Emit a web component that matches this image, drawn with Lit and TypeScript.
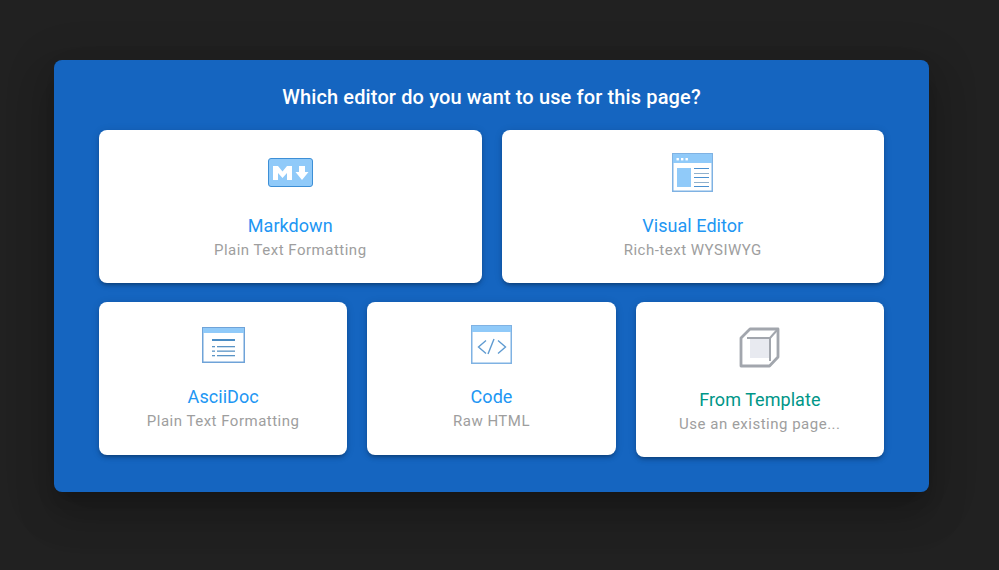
import { LitElement, html, css } from "lit";
import { customElement } from "lit/decorators.js";

const md = html`<svg class="icon" width="47" height="30" viewBox="0 0 47 30">
  <rect x="1.500" y="0.500" width="44" height="28" rx="2.500" fill="#90caf9" stroke="#3d8fd6" stroke-width="1"/>
  <path fill="#fff" d="M6 22V8h5l4.500 5.500L20 8h5v14h-5v-7l-4.500 5-4.500-5v7z"/>
  <path fill="#fff" d="M32 8h6v6h3.500l-6.500 8-6.500-8H32z"/>
</svg>`;

const visual = html`<svg class="icon" width="44" height="42" viewBox="0 0 44 42">
  <rect x="1.750" y="1.750" width="39.500" height="37.500" fill="#fff" stroke="#7fb2e3" stroke-width="1.500"/>
  <rect x="2" y="2" width="39" height="9" fill="#90caf9"/>
  <rect x="5.500" y="6" width="2.400" height="2.400" fill="#fff"/><rect x="10" y="6" width="2.400" height="2.400" fill="#fff"/><rect x="14.500" y="6" width="2.400" height="2.400" fill="#fff"/>
  <rect x="6" y="16" width="14" height="19" fill="#90caf9"/>
  <g fill="#4a90d0"><rect x="23" y="16" width="15" height="1"/><rect x="23" y="25" width="15" height="1"/><rect x="23" y="34" width="15" height="1"/></g>
  <g fill="#8fb0cc"><rect x="23" y="21" width="15" height="1"/><rect x="23" y="30" width="15" height="1"/></g>
</svg>`;

const ascii = html`<svg class="icon" width="46" height="40" viewBox="0 0 46 40">
  <rect x="2.750" y="2.750" width="41.500" height="34.500" fill="#fff" stroke="#6fa3d8" stroke-width="1.500"/>
  <rect x="3" y="3" width="41" height="5" fill="#90caf9"/>
  <rect x="12" y="14" width="23" height="2" fill="#4a8cc4"/>
  <g fill="#5a94c6"><rect x="12" y="21" width="3" height="1.300"/><rect x="17" y="21" width="18" height="1.300"/><rect x="12" y="25.500" width="3" height="1.300"/><rect x="17" y="25.500" width="18" height="1.300"/><rect x="12" y="30" width="3" height="1.300"/><rect x="17" y="30" width="18" height="1.300"/></g>
</svg>`;

const code = html`<svg class="icon" width="43" height="40" viewBox="0 0 43 40">
  <rect x="1.750" y="0.750" width="39.500" height="37.500" fill="#fff" stroke="#7fb2e3" stroke-width="1.500"/>
  <rect x="2" y="1" width="39" height="6" fill="#90caf9"/>
  <g fill="none" stroke="#5f9bd1" stroke-width="1.400">
    <path d="M16 15.500L8.500 22l7.500 6.500"/><path d="M28 15.500l7.500 6.500-7.500 6.500"/><path d="M24 14l-6 15"/>
  </g>
</svg>`;

const tpl = html`<svg class="icon" width="42" height="42" viewBox="0 0 42 42">
  <rect x="11" y="11" width="20" height="20" fill="#e8eaf0"/>
  <path fill="none" stroke="#a2a6ad" stroke-width="2.800" stroke-linejoin="round" d="M11 2h28v28l-8.500 9H2V11z"/>
  <g fill="none" stroke="#a2a6ad" stroke-width="2">
    <path d="M8 11h23v23"/><path d="M31 11l8-9"/>
  </g>
</svg>`;

@customElement("app-root")
export class AppRoot extends LitElement {
  static styles = css`
    :host { display: block; height: 570px; background: #212121; font-family: Roboto, sans-serif; overflow: hidden; }
    .stage { padding: 60px 0 0 54px; }
    .dialog { box-sizing: border-box; width: 875px; height: 432px; background: #1565c0; border-radius: 8px; padding: 24px 45px 0;
      box-shadow: 0 11px 15px -7px rgba(0,0,0,.2), 0 24px 38px 3px rgba(0,0,0,.14), 0 9px 46px 8px rgba(0,0,0,.12); }
    h1 { margin: 0 0 20px; color: #fff; font-size: 20px; font-weight: 500; line-height: 26px; text-align: center; letter-spacing: .13px; }
    .grid { display: flex; flex-direction: column; gap: 19px; }
    .row { display: flex; gap: 20px; align-items: flex-start; }
    .card { flex: 1 1 0; min-width: 0; box-sizing: border-box; background: #fff; border-radius: 8px; height: 153px; text-align: center; display: flex; flex-direction: column; align-items: center;
      box-shadow: 0 3px 3px -2px rgba(0,0,0,.2), 0 3px 4px 0 rgba(0,0,0,.14), 0 1px 8px 0 rgba(0,0,0,.12); }
    .tall { height: 155px; }
    .icon { display: block; flex: none; }
    .slot { height: 42px; display: flex; align-items: center; justify-content: center; }
    .top .slot { margin-top: 22px; }
    .top .label { margin-top: 20px; }
    .bot .slot { margin-top: 22px; }
    .bot .label { margin-top: 19px; }
    .bot .tall .slot { margin-top: 25px; }
    .label { font-size: 18px; line-height: 24px; color: #2196f3; letter-spacing: .05px; }
    .teal { color: #009688; }
    .sub { margin-top: 1px; font-size: 15px; line-height: 22px; color: #9e9e9e; letter-spacing: .5px; }
  `;
  private card(icon: unknown, label: string, sub: string, cls = "", lcls = "") {
    return html`<div class="card ${cls}"><div class="slot">${icon}</div><div class="label ${lcls}">${label}</div><div class="sub">${sub}</div></div>`;
  }
  render() {
    return html`<div class="stage"><div class="dialog">
      <h1>Which editor do you want to use for this page?</h1>
      <div class="grid">
        <div class="row top">
          ${this.card(md, "Markdown", "Plain Text Formatting")}
          ${this.card(visual, "Visual Editor", "Rich-text WYSIWYG")}
        </div>
        <div class="row bot">
          ${this.card(ascii, "AsciiDoc", "Plain Text Formatting")}
          ${this.card(code, "Code", "Raw HTML")}
          ${this.card(tpl, "From Template", "Use an existing page...", "tall", "teal")}
        </div>
      </div>
    </div></div>`;
  }
}
